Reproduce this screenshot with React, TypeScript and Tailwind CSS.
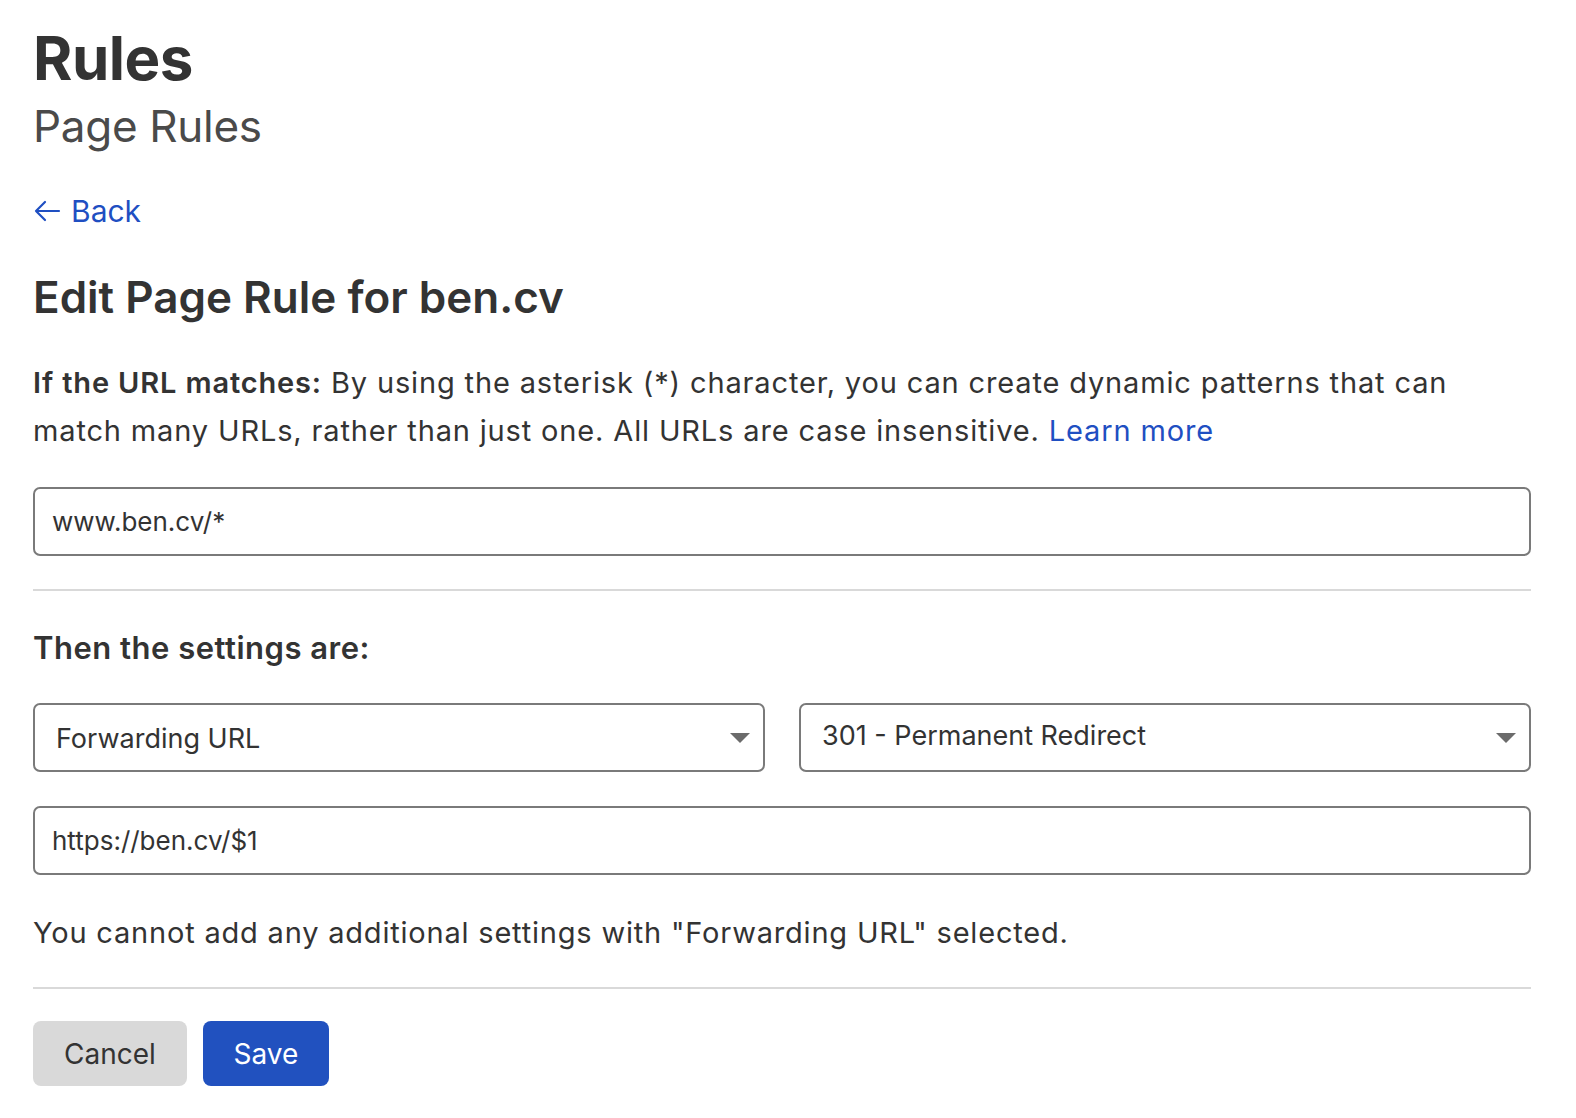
import React from "react";

function Caret() {
  return (
    <svg width="20" height="10" viewBox="0 0 20 10" className="shrink-0">
      <path d="M0 0 H20 L10 10 Z" fill="#6b6b6b" />
    </svg>
  );
}

export default function App() {
  return (
    <div
      className="min-h-[1118px] w-full bg-white text-[#333333]"
      style={{ fontFamily: "Inter, 'Noto Sans', sans-serif" }}
    >
      <div className="px-[33px] pt-[22px] pr-[45px]">
        <h1 className="text-[60px] font-bold leading-[72px] tracking-[-0.5px] text-[#333333]">Rules</h1>
        <h2 className="mt-[6px] text-[44px] leading-[52px] text-[#4a4a4a] tracking-[-0.3px]">Page Rules</h2>

        <a className="mt-[39px] flex items-center gap-[10px] text-[30px] leading-[40px] text-[#1f4fc2]">
          <svg width="28" height="24" viewBox="0 0 28 24" fill="none" stroke="#1f4fc2" strokeWidth="2.2" strokeLinecap="round" strokeLinejoin="round">
            <path d="M26 12 H3 M12 3 L3 12 L12 21" />
          </svg>
          <span>Back</span>
        </a>

        <h3 className="mt-[38px] text-[44px] font-semibold leading-[56px] text-[#333333]">
          Edit Page Rule for ben.cv
        </h3>

        <p className="mt-[34px] text-[29px] leading-[48px] tracking-[0.85px] text-[#333333]">
          <span className="font-semibold">If the URL matches:</span> By using the asterisk (*) character, you can create dynamic patterns that can match many URLs, rather than just one. All URLs are case insensitive.{" "}
          <a className="text-[#1f4fc2]">Learn more</a>
        </p>

        <div className="mt-[32px] flex h-[69px] items-center rounded-[7px] border-2 border-[#7a7a7a] px-[17px] text-[26px]">
          www.ben.cv/*
        </div>

        <div className="mt-[33px] h-[2px] bg-[#d9d9d9]" />

        <div className="mt-[37px] text-[31px] font-semibold leading-[40px] tracking-[0.5px]">Then the settings are:</div>

        <div className="mt-[35px] grid grid-cols-2 gap-[34px]">
          <div className="flex h-[69px] items-center justify-between rounded-[7px] border-2 border-[#7a7a7a] pl-[21px] pr-[13px] text-[27px]">
            <span className="pt-[3px]">Forwarding URL</span>
            <Caret />
          </div>
          <div className="flex h-[69px] items-center justify-between rounded-[7px] border-2 border-[#7a7a7a] pl-[21px] pr-[13px] text-[27px]">
            <span className="pb-[3px]">301 - Permanent Redirect</span>
            <Caret />
          </div>
        </div>

        <div className="mt-[34px] flex h-[69px] items-center rounded-[7px] border-2 border-[#7a7a7a] px-[17px] text-[26px]">
          https://ben.cv/$1
        </div>

        <p className="mt-[36px] text-[29px] leading-[44px] tracking-[0.8px]">
          You cannot add any additional settings with "Forwarding URL" selected.
        </p>

        <div className="mt-[32px] h-[2px] bg-[#d9d9d9]" />

        <div className="mt-[32px] flex gap-[16px]">
          <button className="flex h-[65px] w-[154px] items-center justify-center rounded-[8px] bg-[#d9d9d9] text-[28px] text-[#333333]">
            Cancel
          </button>
          <button className="flex h-[65px] w-[126px] items-center justify-center rounded-[8px] bg-[#2151bf] text-[28px] text-white">
            Save
          </button>
        </div>
      </div>
    </div>
  );
}
